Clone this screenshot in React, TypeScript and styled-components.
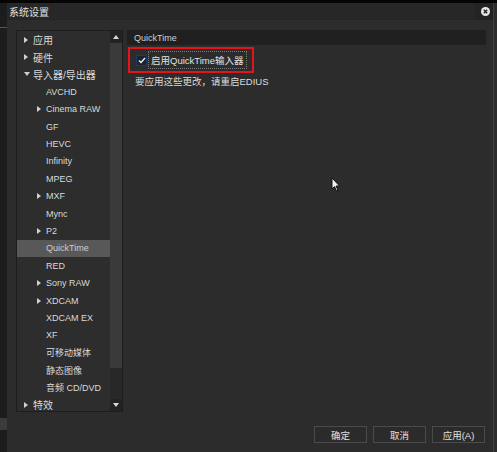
import React from 'react';
import styled, { createGlobalStyle } from 'styled-components';

const GlobalStyle = createGlobalStyle`
  html, body {
    margin: 0;
    padding: 0;
    background: #000;
  }
  body {
    font-family: "Liberation Sans", "Noto Sans CJK SC", sans-serif;
    font-size: 9px;
    color: #d6d6d6;
  }
`;

const Screen = styled.div`
  width: 497px;
  height: 452px;
  display: flex;
  flex-direction: column;
  overflow: hidden;
  background: #000;
`;

const TopEdge = styled.div`
  height: 3px;
  background: #050505;
`;

const Desk = styled.div`
  flex: 1;
  display: flex;
  min-height: 0;
`;

const BackWindow = styled.div`
  width: 7px;
  background: #1b1c1b;
  display: flex;
  flex-direction: column;
`;

const BackLine = styled.div<{ $color: string; $top: number; $h?: number }>`
  margin-top: ${(p) => p.$top}px;
  height: ${(p) => p.$h ?? 1}px;
  background: ${(p) => p.$color};
`;

const Dialog = styled.div`
  flex: 1;
  display: flex;
  flex-direction: column;
  background: #2b2c2b;
  position: relative;
  min-width: 0;
`;

const RightEdge = styled.div`
  width: 3px;
  background: #2b2c2b;
  border-left: 1px solid #3f403f;
`;

const TitleBar = styled.div`
  height: 17px;
  display: flex;
  align-items: center;
  background: #262726;
  border-bottom: 1px solid #232423;
  box-sizing: border-box;
`;

const Title = styled.div`
  flex: 1;
  padding-left: 2px;
  font-size: 10px;
  color: #e0e0e0;
`;

const CloseBox = styled.div`
  width: 18px;
  height: 17px;
  display: flex;
  align-items: center;
  justify-content: flex-end;
  padding-right: 3px;
  box-sizing: border-box;
  background: #222322;
`;

const Main = styled.div`
  display: flex;
  gap: 4px;
  padding: 10px 7px 0 9px;
`;

const TreePanel = styled.div`
  width: 107px;
  height: 382px;
  box-sizing: border-box;
  border: 1px solid #1c1d1c;
  background: #2c2d2c;
  display: flex;
  overflow: hidden;
`;

const TreeList = styled.div`
  flex: 1;
  display: flex;
  flex-direction: column;
  min-width: 0;
`;

const TreeRow = styled.div<{ $depth: number; $selected?: boolean }>`
  height: 17.4px;
  flex-shrink: 0;
  display: flex;
  align-items: center;
  padding-left: ${(p) => (p.$depth === 0 ? 7 : 20)}px;
  background: ${(p) => (p.$selected ? '#575857' : 'transparent')};
  color: ${(p) => (p.$selected ? '#cfcfcf' : '#dadada')};
  font-size: ${(p) => (p.$depth === 0 ? 10 : 9)}px;
  white-space: nowrap;
`;

const ArrowSlot = styled.span`
  width: 9px;
  flex-shrink: 0;
  display: flex;
  align-items: center;
`;

const Arrow = styled.span<{ $open?: boolean }>`
  width: 0;
  height: 0;
  border-style: solid;
  border-color: transparent;
  ${(p) =>
    p.$open
      ? 'border-width: 4px 3px 0 3px; border-top-color: #d0d0d0;'
      : 'border-width: 3px 0 3px 4px; border-left-color: #d0d0d0;'}
`;

const ScrollBar = styled.div`
  width: 12px;
  display: flex;
  flex-direction: column;
  background: #272827;
`;

const ScrollBtn = styled.div`
  height: 12px;
  flex-shrink: 0;
  display: flex;
  align-items: center;
  justify-content: center;
  background: #222322;
`;

const ScrollArrow = styled.span<{ $down?: boolean }>`
  width: 0;
  height: 0;
  border-style: solid;
  border-color: transparent;
  ${(p) =>
    p.$down
      ? 'border-width: 4px 3px 0 3px; border-top-color: #d8d8d8;'
      : 'border-width: 0 3px 4px 3px; border-bottom-color: #d8d8d8;'}
`;

const ScrollThumb = styled.div`
  height: 325px;
  background: #393a39;
`;

const ScrollTrack = styled.div`
  flex: 1;
`;

const Content = styled.div`
  flex: 1;
  display: flex;
  flex-direction: column;
`;

const Header = styled.div`
  height: 15px;
  display: flex;
  align-items: center;
  padding-left: 7px;
  background: #1f201f;
  color: #d0d0d0;
  font-size: 9px;
`;

const Highlight = styled.div`
  margin-top: 2px;
  margin-left: 1px;
  width: 126px;
  height: 26px;
  box-sizing: border-box;
  border: 2px solid #e5141b;
  display: flex;
  align-items: center;
  padding-left: 6px;
  gap: 1px;
`;

const CheckBox = styled.div`
  width: 11px;
  height: 11px;
  box-sizing: border-box;
  border: 1px solid #1e3a6a;
  background: #1a2232;
  display: flex;
  align-items: center;
  justify-content: center;
`;

const CheckLabel = styled.div`
  padding: 1px 2px;
  border: 1px dotted #7a7a7a;
  font-size: 9.5px;
  color: #e2e2e2;
`;

const Note = styled.div`
  margin-top: 1px;
  padding-left: 8px;
  font-size: 9.5px;
  color: #dcdcdc;
`;

const Footer = styled.div`
  margin-top: 14px;
  display: flex;
  justify-content: flex-end;
  gap: 6px;
  padding-right: 8px;
`;

const Button = styled.div`
  width: 53px;
  height: 17px;
  box-sizing: border-box;
  border: 1px solid #4a4b4a;
  background: #2a2b2a;
  display: flex;
  align-items: center;
  justify-content: center;
  font-size: 9.5px;
  color: #e0e0e0;
`;

const Cursor = styled.svg`
  position: absolute;
  left: 324px;
  top: 174px;
`;

type Item = { label: string; depth: number; arrow?: 'closed' | 'open' };

const items: Item[] = [
  { label: '应用', depth: 0, arrow: 'closed' },
  { label: '硬件', depth: 0, arrow: 'closed' },
  { label: '导入器/导出器', depth: 0, arrow: 'open' },
  { label: 'AVCHD', depth: 1 },
  { label: 'Cinema RAW', depth: 1, arrow: 'closed' },
  { label: 'GF', depth: 1 },
  { label: 'HEVC', depth: 1 },
  { label: 'Infinity', depth: 1 },
  { label: 'MPEG', depth: 1 },
  { label: 'MXF', depth: 1, arrow: 'closed' },
  { label: 'Mync', depth: 1 },
  { label: 'P2', depth: 1, arrow: 'closed' },
  { label: 'QuickTime', depth: 1 },
  { label: 'RED', depth: 1 },
  { label: 'Sony RAW', depth: 1, arrow: 'closed' },
  { label: 'XDCAM', depth: 1, arrow: 'closed' },
  { label: 'XDCAM EX', depth: 1 },
  { label: 'XF', depth: 1 },
  { label: '可移动媒体', depth: 1 },
  { label: '静态图像', depth: 1 },
  { label: '音频 CD/DVD', depth: 1 },
  { label: '特效', depth: 0, arrow: 'closed' },
];

const App = () => {
  return (
    <>
      <GlobalStyle />
      <Screen>
        <TopEdge />
        <Desk>
          <BackWindow>
            <BackLine $color="#2c58b8" $top={24} />
            <BackLine $color="#3a3b3a" $top={390} $h={12} />
          </BackWindow>
          <Dialog>
            <TitleBar>
              <Title>系统设置</Title>
              <CloseBox>
                <svg width="9" height="9" viewBox="0 0 9 9">
                  <circle cx="4.5" cy="4.5" r="4.5" fill="#e8e8e8" />
                  <path d="M2.8 2.8 L6.2 6.2 M6.2 2.8 L2.8 6.2" stroke="#222" strokeWidth="1.4" />
                </svg>
              </CloseBox>
            </TitleBar>
            <Main>
              <TreePanel>
                <TreeList>
                  {items.map((it) => (
                    <TreeRow key={it.label} $depth={it.depth} $selected={it.label === 'QuickTime'}>
                      <ArrowSlot>{it.arrow && <Arrow $open={it.arrow === 'open'} />}</ArrowSlot>
                      {it.label}
                    </TreeRow>
                  ))}
                </TreeList>
                <ScrollBar>
                  <ScrollBtn>
                    <ScrollArrow />
                  </ScrollBtn>
                  <ScrollThumb />
                  <ScrollTrack />
                  <ScrollBtn>
                    <ScrollArrow $down />
                  </ScrollBtn>
                </ScrollBar>
              </TreePanel>
              <Content>
                <Header>QuickTime</Header>
                <Highlight>
                  <CheckBox>
                    <svg width="8" height="7" viewBox="0 0 8 7">
                      <path d="M1 3.5 L3 5.5 L7 1" stroke="#f0f0f0" strokeWidth="1.4" fill="none" />
                    </svg>
                  </CheckBox>
                  <CheckLabel>启用QuickTime输入器</CheckLabel>
                </Highlight>
                <Note>要应用这些更改，请重启EDIUS</Note>
              </Content>
            </Main>
            <Footer>
              <Button>确定</Button>
              <Button>取消</Button>
              <Button>应用(A)</Button>
            </Footer>
            <Cursor width="10" height="15" viewBox="0 0 10 15">
              <path d="M1 1 L1 12 L3.5 9.6 L5.5 14 L7 13.3 L5 9 L8.5 9 Z" fill="#f2f2f2" stroke="#111" strokeWidth="1" />
            </Cursor>
          </Dialog>
          <RightEdge />
        </Desk>
      </Screen>
    </>
  );
};

export default App;
